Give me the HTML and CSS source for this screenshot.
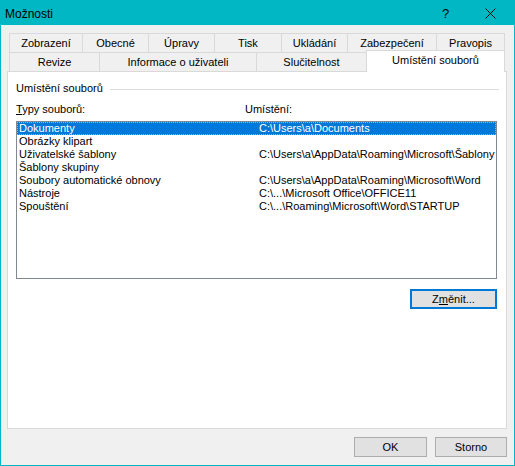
FILE: index.html
```html
<!DOCTYPE html>
<html lang="cs">
<head>
<meta charset="utf-8">
<title>Možnosti</title>
<link rel="stylesheet" href="styles.css">
</head>
<body>
<div class="window">
  <div class="titlebar">
    <span class="title">Možnosti</span>
    <span class="help">?</span>
    <span class="close"><svg width="11" height="11" viewBox="0 0 11 11"><path d="M0.5 0.5 L10.5 10.5 M10.5 0.5 L0.5 10.5" stroke="#000" stroke-width="1" fill="none"/></svg></span>
  </div>
  <div class="body">
    <div class="tabs">
      <div class="tabrow row1">
        <div class="tab">Zobrazení</div>
        <div class="tab">Obecné</div>
        <div class="tab">Úpravy</div>
        <div class="tab">Tisk</div>
        <div class="tab">Ukládání</div>
        <div class="tab">Zabezpečení</div>
        <div class="tab last">Pravopis</div>
      </div>
      <div class="tabrow row2">
        <div class="tab">Revize</div>
        <div class="tab">Informace o uživateli</div>
        <div class="tab">Slučitelnost</div>
        <div class="tab last selected">Umístění souborů</div>
      </div>
    </div>
    <div class="panel">
      <div class="group"><span class="group-label">Umístění souborů</span><span class="rule"></span></div>
      <div class="header"><span class="hc1"><u>T</u>ypy souborů:</span><span class="hc2">Umístění:</span></div>
      <div class="list">
        <div class="row sel"><span class="c1">Dokumenty</span><span class="c2">C:\Users\a\Documents</span></div>
        <div class="row"><span class="c1">Obrázky klipart</span><span class="c2"></span></div>
        <div class="row"><span class="c1">Uživatelské šablony</span><span class="c2">C:\Users\a\AppData\Roaming\Microsoft\Šablony</span></div>
        <div class="row"><span class="c1">Šablony skupiny</span><span class="c2"></span></div>
        <div class="row"><span class="c1">Soubory automatické obnovy</span><span class="c2">C:\Users\a\AppData\Roaming\Microsoft\Word</span></div>
        <div class="row"><span class="c1">Nástroje</span><span class="c2">C:\...\Microsoft Office\OFFICE11</span></div>
        <div class="row"><span class="c1">Spouštění</span><span class="c2">C:\...\Roaming\Microsoft\Word\STARTUP</span></div>
      </div>
      <div class="btnrow"><button class="btn focus">Z<u>m</u>ěnit...</button></div>
    </div>
    <div class="footer">
      <button class="btn ok">OK</button>
      <button class="btn cancel">Storno</button>
    </div>
  </div>
</div>
</body>
</html>
```

FILE: styles.css
```css
html, body {
  margin: 0;
  padding: 0;
}
body {
  width: 515px;
  height: 466px;
  overflow: hidden;
  font-family: "Liberation Sans", Arial, sans-serif;
  font-size: 11px;
  color: #000;
}
.window {
  box-sizing: border-box;
  width: 515px;
  height: 466px;
  border: 1px solid #00b7c3;
  background: #f0f0f0;
  display: flex;
  flex-direction: column;
}
.titlebar {
  height: 24px;
  background: #00b7c3;
  display: flex;
  align-items: center;
  flex: none;
}
.title {
  font-size: 12px;
  padding-left: 4px;
  flex: 1;
  margin-top: 1px;
}
.help {
  font-size: 13px;
  width: 12px;
  margin-right: 31px;
  margin-top: 1px;
}
.close {
  display: flex;
  width: 11px;
  height: 11px;
  margin-right: 18px;
  margin-top: 1px;
}
.body {
  flex: 1;
  padding: 8px 7px 0 6px;
}
.tabs {
  margin: 0 2px;
  width: 496px;
}
.tabrow {
  display: grid;
}
.row1 {
  grid-template-columns: 73px 66px 66px 67px 66px 89px 69px;
  height: 19px;
}
.row2 {
  grid-template-columns: 90px 157px 110px 139px;
  margin-top: -2px;
  height: 21px;
  align-items: end;
}
.tab {
  box-sizing: border-box;
  height: 19px;
  border-top: 1px solid #d9d9d9;
  border-left: 1px solid #d9d9d9;
  background: #f0f0f0;
  display: flex;
  align-items: center;
  justify-content: center;
  font-size: 11px;
  padding-bottom: 1px;
}
.tab.last {
  border-right: 1px solid #d9d9d9;
}
.tab.selected {
  height: 22px;
  margin-bottom: -1px;
  background: #fff;
  position: relative;
  z-index: 1;
  padding-bottom: 3px;
}
.panel {
  box-sizing: border-box;
  height: 358px;
  border: 1px solid #d9d9d9;
  background: #fff;
  padding: 9px 7px 0 8px;
}
.group {
  display: flex;
  align-items: center;
  height: 15px;
}
.group-label {
  line-height: 15px;
}
.rule {
  flex: 1;
  height: 1px;
  background: #dcdcdc;
  margin-left: 7px;
  margin-top: 1px;
}
.header {
  display: flex;
  margin-top: 6px;
  height: 14px;
  line-height: 14px;
}
.hc1 {
  width: 229px;
}
.list {
  box-sizing: border-box;
  margin-top: 5px;
  width: 481px;
  height: 158px;
  border: 1px solid #828790;
  background: #fff;
}
.row {
  box-sizing: border-box;
  display: flex;
  height: 13px;
  line-height: 11px;
  padding-left: 1px;
  border: 1px solid transparent;
  white-space: nowrap;
}
.row.sel {
  background: #0078d7;
  color: #fff;
  border: 1px dotted #f7a341;
}
.c1 {
  width: 240px;
  flex: none;
}
.btnrow {
  display: flex;
  justify-content: flex-end;
  width: 481px;
  margin-top: 10px;
}
.btn {
  box-sizing: border-box;
  height: 20px;
  padding: 0;
  margin: 0;
  background: #e1e1e1;
  border: 1px solid #adadad;
  font-family: "Liberation Sans", Arial, sans-serif;
  font-size: 11px;
  color: #000;
}
.btn.focus {
  width: 87px;
  border: 2px solid #0078d7;
}
.footer {
  display: flex;
  justify-content: flex-end;
  gap: 8px;
  margin-top: 8px;
}
.btn.ok {
  width: 73px;
}
.btn.cancel {
  width: 72px;
}
```
